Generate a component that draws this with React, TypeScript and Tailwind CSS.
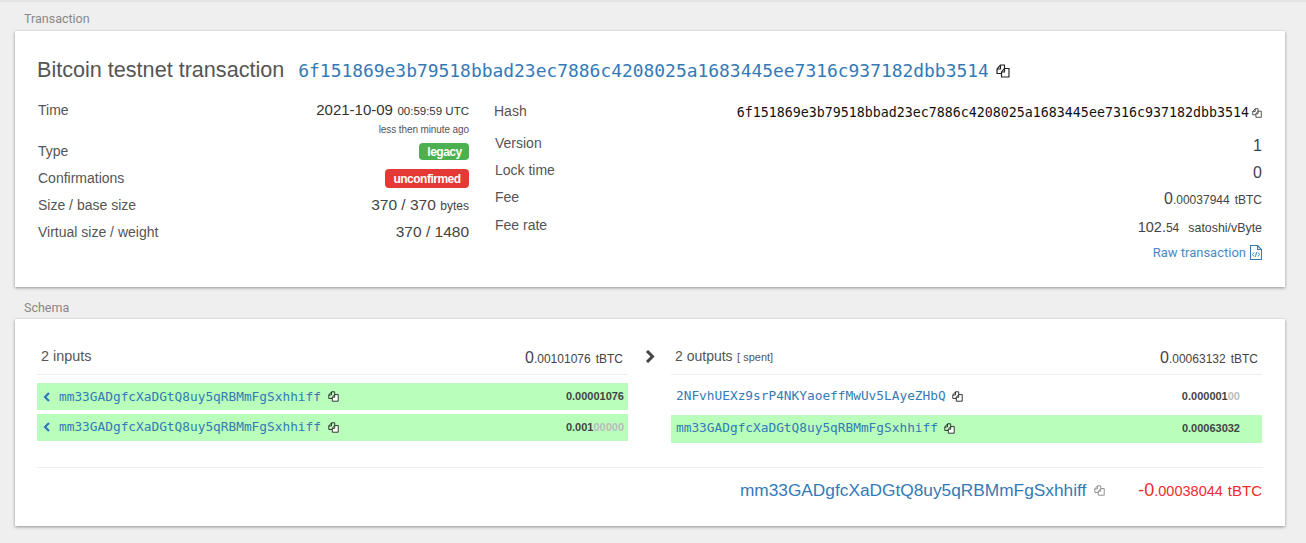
import React from "react";

const sans = "font-['Liberation_Sans',Arial,sans-serif]";
const rob = "font-['Roboto',sans-serif]";
const mono = "font-['DejaVu_Sans_Mono',monospace]";

function CopyIcon({ size = 14, className = "text-[#222]" }: { size?: number; className?: string }) {
  return (
    <svg width={size} height={size} viewBox="0 0 14 14" fill="none" stroke="currentColor" strokeWidth="1.15" className={"shrink-0 " + className}>
      <path d="M5.5 9.5H1V5L4.5 1H8.5V4.5" />
      <path d="M1 5H4.5V1" />
      <path d="M5.5 9V13H13V4.5H8.5L5.5 8V9Z" fill="white" />
      <path d="M5.5 8H8.5V4.5" />
    </svg>
  );
}

function FileCode() {
  return (
    <svg width="12" height="15" viewBox="0 0 12 15" fill="none" stroke="#337ab7" strokeWidth="1.1" className="shrink-0">
      <path d="M0.5 0.5H7.5L11.5 4.5V14.5H0.5Z" />
      <path d="M7.5 0.5V4.5H11.5" />
      <path d="M4 7.5L2.5 9.5L4 11.5M8 7.5L9.5 9.5L8 11.5M6.6 7.2L5.4 11.8" strokeWidth="0.9" />
    </svg>
  );
}

function Row({ label, children, h = "h-[27px]", value = "" }: { label: string; children: React.ReactNode; h?: string; value?: string }) {
  return (
    <div className={"flex items-center justify-between " + h}>
      <span className={"text-[14px] text-[#555] " + sans}>{label}</span>
      <div className={"flex items-center " + value}>{children}</div>
    </div>
  );
}

function Amount({ big, small, unit }: { big: string; small: string; unit: string }) {
  return (
    <span className={"text-[#444] whitespace-nowrap " + sans}>
      <span className="text-[16px]">{big}</span>
      <span className="text-[12px]">{small}</span>
      <span className="text-[12px] ml-[5px]">{unit}</span>
    </span>
  );
}

function Addr({ text, green, chevron, amount, faded, h }: { text: string; green?: boolean; chevron?: boolean; amount: string; faded?: string; h: string }) {
  return (
    <div className={"flex items-center " + h + " " + (green ? "bg-[#b9ffbb]" : "")}>
      {chevron ? (
        <svg width="8" height="10" viewBox="0 0 8 10" fill="none" stroke="#2f74c0" strokeWidth="2.2" className="ml-[6px] mr-[8px] shrink-0">
          <path d="M6 1L2 5L6 9" />
        </svg>
      ) : null}
      <span className={"text-[12.8px] text-[#337ab7] whitespace-nowrap " + mono + (chevron ? "" : " ml-[5px]")}>{text}</span>
      <CopyIcon size={11} className={"text-[#222] " + (chevron ? "ml-[7px]" : "ml-[6px]")} />
      <span className={"ml-auto text-[11px] font-bold text-[#444] " + sans + (chevron ? " mr-[4px]" : " mr-[22px]")}>
        {amount}
        {faded ? <span className="text-[#bbb]">{faded}</span> : null}
      </span>
    </div>
  );
}

export default function App() {
  return (
    <div className={"w-[1306px] h-[543px] overflow-hidden bg-[#efefef] " + sans}>
      <div className="h-[2px] bg-[#e4e4e4]" />
      <div className={"h-[29px] pl-[24px] pt-[10px] text-[12.5px] leading-[14px] text-[#888] " + rob}>Transaction</div>

      <div className="ml-[15px] w-[1270px] h-[256px] bg-white shadow-[0_1px_3px_rgba(0,0,0,0.4)] pt-[24px] px-[22px]">
        <div className="flex items-center h-[32px]">
          <h1 className={"text-[21.6px] font-normal text-[#555] pb-[2px] " + sans}>Bitcoin testnet transaction</h1>
          <span className={"ml-[14px] text-[17.93px] text-[#337ab7] " + mono}>6f151869e3b79518bbad23ec7886c4208025a1683445ee7316c937182dbb3514</span>
          <CopyIcon size={14} className="text-[#222] ml-[7px]" />
        </div>

        <div className="flex mt-[9px]">
          <div className="w-[431px] ml-[1px] flex flex-col">
            <div className="h-[42px] flex justify-between pt-[4px]">
              <span className={"text-[14px] leading-[20px] text-[#555] " + sans}>Time</span>
              <div className="flex flex-col items-end">
                <span className={"text-[#333] leading-[20px] " + sans}>
                  <span className="text-[15px]">2021-10-09</span> <span className="text-[11.5px]">00:59:59 UTC</span>
                </span>
                <span className={"text-[10px] leading-[16px] mt-[1px] text-[#555] tracking-[-0.1px] " + sans}>less then minute ago</span>
              </div>
            </div>
            <Row label="Type">
              <span className={"h-[17px] w-[50px] pl-[1px] rounded-[4px] bg-[#4caf50] text-white text-[12px] font-bold tracking-[-0.5px] flex items-center justify-center " + sans}>legacy</span>
            </Row>
            <Row label="Confirmations">
              <span className={"h-[19px] w-[84px] rounded-[4px] bg-[#e53935] text-white text-[12px] font-bold tracking-[-0.5px] flex items-center justify-center " + sans}>unconfirmed</span>
            </Row>
            <Row label="Size / base size" value="pb-[2px]">
              <span className={"text-[#444] " + sans}><span className="text-[15.5px]">370 / 370</span> <span className="text-[12px]">bytes</span></span>
            </Row>
            <Row label="Virtual size / weight" value="pb-[2px]">
              <span className={"text-[15.5px] text-[#444] " + sans}>370 / 1480</span>
            </Row>
          </div>

          <div className="ml-[26px] w-[767px] flex flex-col">
            <div className="h-[34px] pb-[4px] flex items-center justify-between">
              <span className={"text-[14px] text-[#555] -ml-[1px] " + sans}>Hash</span>
              <div className="flex items-center mt-[4px]">
                <span className={"text-[13.3px] text-[#111] " + mono}>6f151869e3b79518bbad23ec7886c4208025a1683445ee7316c937182dbb3514</span>
                <CopyIcon size={10} className="text-[#333] ml-[3px]" />
              </div>
            </div>
            <Row label="Version" value="pt-[4px]"><span className={"text-[16px] text-[#444] " + sans}>1</span></Row>
            <Row label="Lock time" value="pt-[4px]"><span className={"text-[16px] text-[#444] " + sans}>0</span></Row>
            <Row label="Fee" value="pt-[3px]"><Amount big="0" small=".00037944" unit="tBTC" /></Row>
            <Row label="Fee rate" h="h-[28px] pt-[1px]" value="pt-[2px]">
              <span className={"text-[#444] whitespace-nowrap " + sans}>
                <span className="text-[14.5px]">102.</span><span className="text-[12px]">54</span>
                <span className="text-[12.4px] ml-[9px]">satoshi/vByte</span>
              </span>
            </Row>
            <div className="h-[27px] flex items-center justify-end gap-[4px]">
              <span className={"text-[13px] text-[#4a8ac2] " + rob}>Raw transaction</span>
              <FileCode />
            </div>
          </div>
        </div>
      </div>

      <div className={"h-[32px] pl-[24px] pt-[14px] text-[12.5px] leading-[14px] text-[#888] " + rob}>Schema</div>

      <div className="ml-[15px] w-[1270px] h-[207px] bg-white shadow-[0_1px_3px_rgba(0,0,0,0.4)] px-[22px] pt-[16px]">
        <div className="flex">
          <div className="w-[591px]">
            <div className="h-[40px] flex items-center justify-between border-b border-[#eee] pt-[3px]">
              <span className={"ml-[4px] pt-[1px] text-[14.4px] text-[#555] " + sans}>2 inputs</span>
              <span className="mr-[5px] pt-[4px]"><Amount big="0" small=".00101076" unit="tBTC" /></span>
            </div>
            <div className="mt-[8px] flex flex-col gap-[4px]">
              <Addr green chevron h="h-[27px]" text="mm33GADgfcXaDGtQ8uy5qRBMmFgSxhhiff" amount="0.00001076" />
              <Addr green chevron h="h-[27px] pb-[1px]" text="mm33GADgfcXaDGtQ8uy5qRBMmFgSxhhiff" amount="0.001" faded="00000" />
            </div>
          </div>

          <div className="w-[43px] h-[40px] pt-[3px] flex items-center justify-center">
            <svg width="10" height="13" viewBox="0 0 10 13" fill="none" stroke="#444" strokeWidth="3">
              <path d="M2 1L7.5 6.5L2 12" />
            </svg>
          </div>

          <div className="w-[591px]">
            <div className="h-[40px] flex items-center justify-between border-b border-[#eee] pt-[3px]">
              <span className={"ml-[4px] text-[#555] " + sans}>
                <span className="text-[14px]">2 outputs</span> <span className="text-[11px]">[ spent]</span>
              </span>
              <span className="mr-[4px] pt-[4px]"><Amount big="0" small=".00063132" unit="tBTC" /></span>
            </div>
            <div className="mt-[4px] flex flex-col gap-[2px]">
              <Addr h="h-[34px]" text="2NFvhUEXz9srP4NKYaoeffMwUv5LAyeZHbQ" amount="0.000001" faded="00" />
              <Addr green h="h-[28px] pb-[2px]" text="mm33GADgfcXaDGtQ8uy5qRBMmFgSxhhiff" amount="0.00063032" />
            </div>
          </div>
        </div>

        <div className="mt-[24px] border-t border-[#eee] h-[46px] flex items-center justify-end pr-[1px]">
          <span className={"text-[17.3px] text-[#337ab7] " + sans}>mm33GADgfcXaDGtQ8uy5qRBMmFgSxhhiff</span>
          <CopyIcon size={11} className="text-[#888] ml-[8px]" />
          <span className={"ml-[33px] text-[#f02b2b] whitespace-nowrap " + sans}>
            <span className="text-[18px]">-0</span><span className="text-[14.5px]">.00038044</span><span className="text-[15px] ml-[5px]">tBTC</span>
          </span>
        </div>
      </div>
    </div>
  );
}
